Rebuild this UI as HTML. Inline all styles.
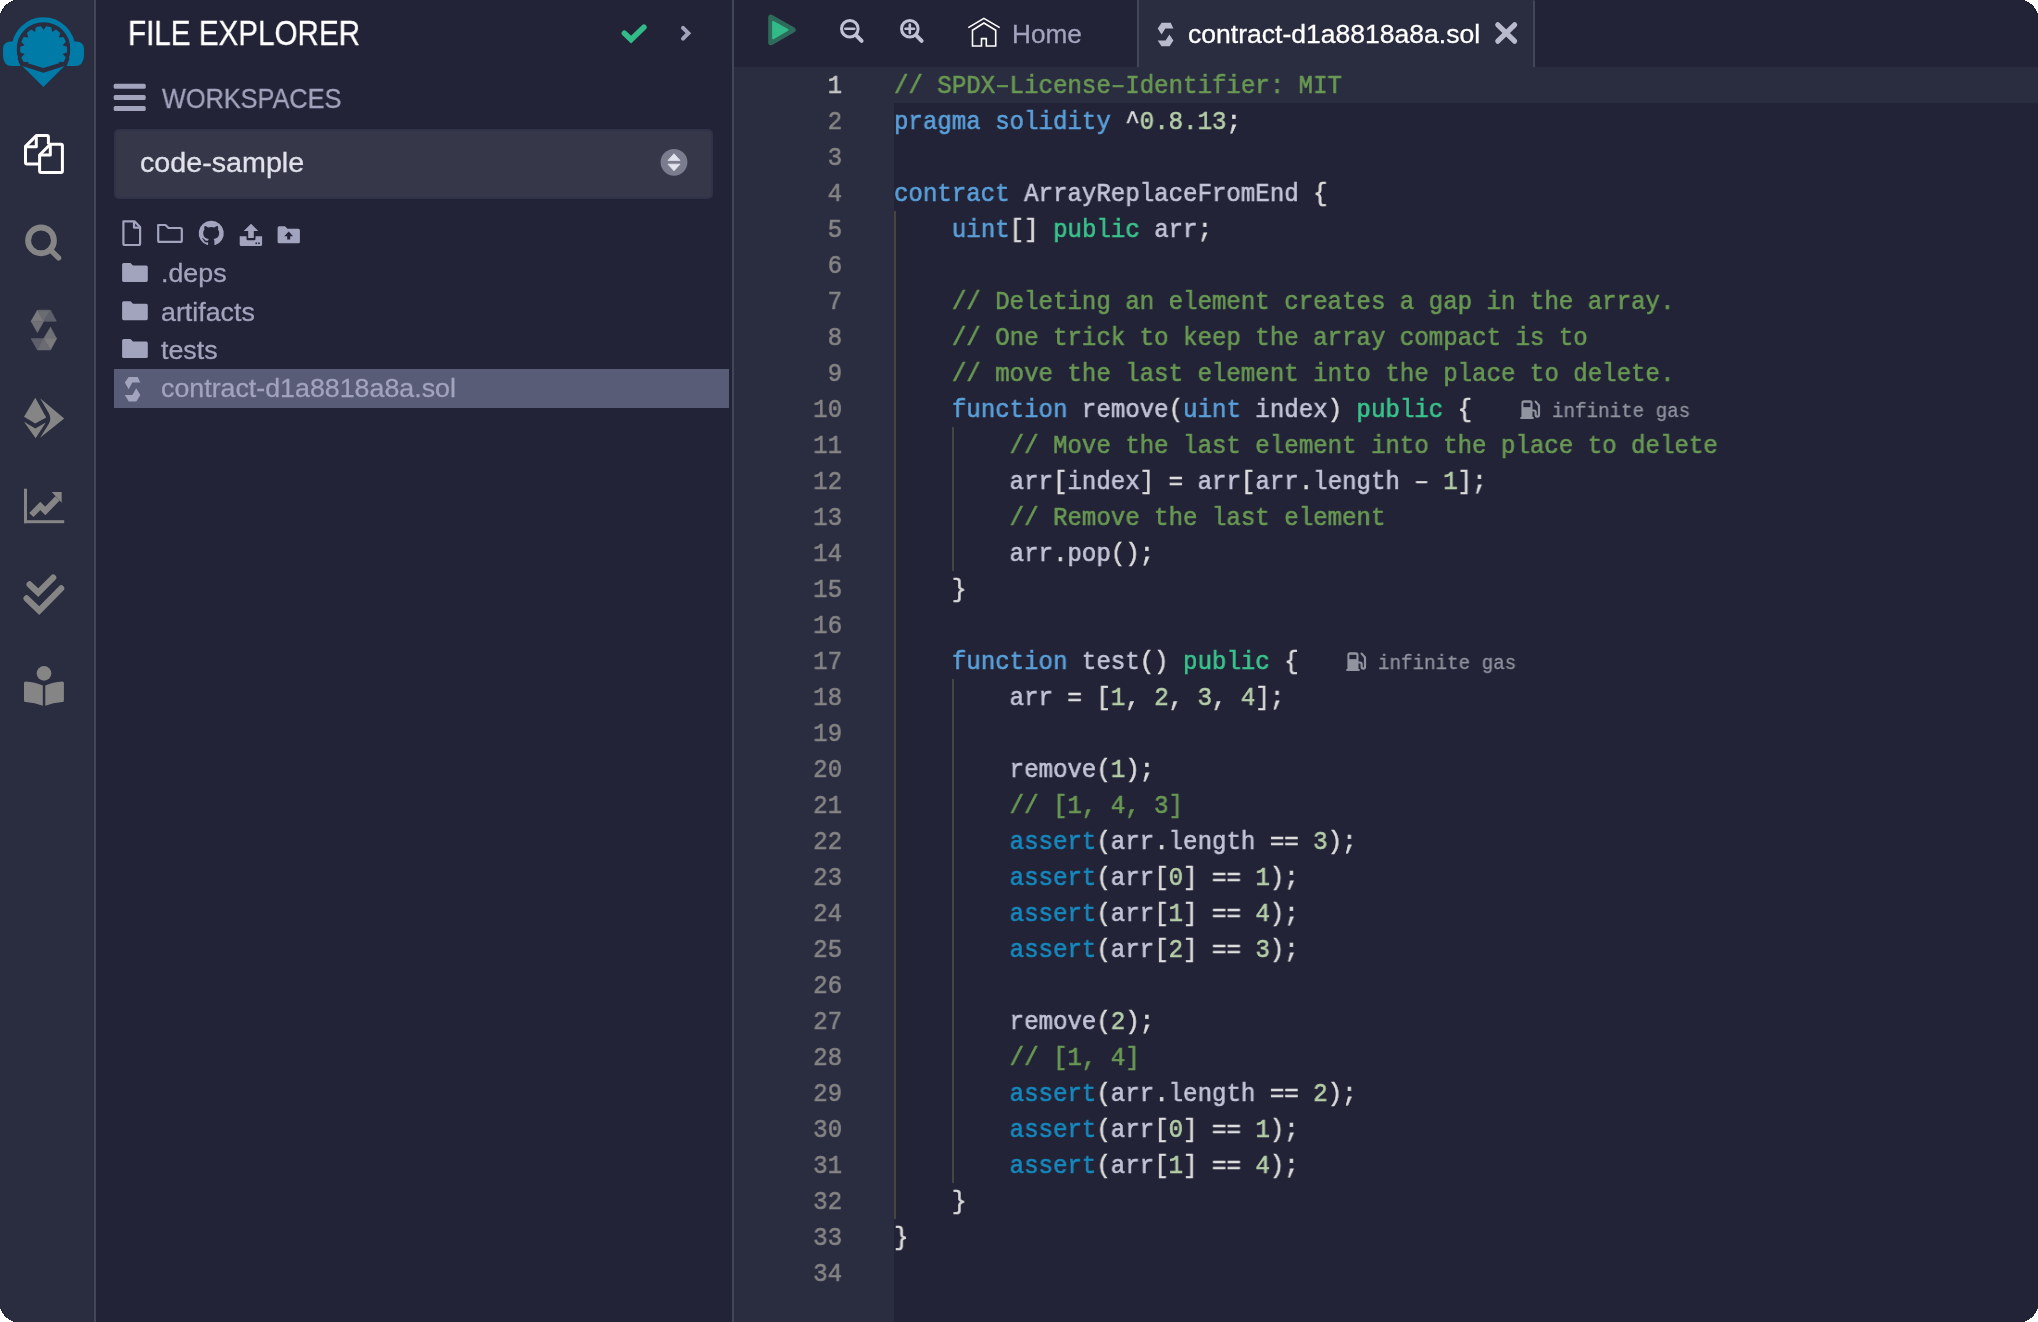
<!DOCTYPE html>
<html><head><meta charset="utf-8">
<style>
html,body{margin:0;padding:0;background:#ffffff;width:2038px;height:1322px;overflow:hidden}
#app{position:absolute;left:0;top:0;width:2038px;height:1322px;overflow:hidden;background:#222336;font-family:"Liberation Sans",sans-serif}
.abs{position:absolute}
.abs,.cl,.ln,.gas,.tree{will-change:transform}
#app div{-webkit-text-stroke:0.3px currentColor}
#iconpanel{left:0;top:0;width:94px;height:1322px;background:#2a2c3f}
#b1{left:94px;top:0;width:2px;height:1322px;background:#414659}
#explorer{left:96px;top:0;width:636px;height:1322px;background:#222336}
#b2{left:732px;top:0;width:2px;height:1322px;background:#414659}
#tabbar{left:734px;top:0;width:1304px;height:67px;background:#222336}
#gutter{left:734px;top:67px;width:160px;height:1255px;background:#2a2c3f}
#code{left:894px;top:67px;width:1144px;height:1255px;background:#222336}
#curline{left:894px;top:67px;width:1144px;height:36px;background:#2a2c3f}
.ln{position:absolute;left:734px;width:108px;text-align:right;font-family:"Liberation Mono",monospace;font-size:26px;line-height:36px;height:36px;color:#858585;padding-top:1px;transform-origin:100% 0;transform:scaleX(0.92147)}
.ln.cur{color:#c6c6c6}
.cl{position:absolute;left:894px;font-family:"Liberation Mono",monospace;font-size:26px;line-height:36px;height:36px;white-space:pre;color:#c3c4d7;padding-top:1px;transform-origin:0 0;transform:scaleX(0.92628)}
#app .cl,#app .ln{-webkit-text-stroke:0.6px currentColor}
.o{color:#dcdcdc}
.c{color:#699953}.k{color:#5aa0da}.p{color:#3ac48d}.n{color:#b5cea8}.a{color:#1789bf}.w{color:#d8d8d8}
.guide{position:absolute;width:2px;background:#45463f}
.tree{left:161px;font-size:25.4px;line-height:30px;transform-origin:0 0;transform:scaleX(1.055);color:#a2a3bd;white-space:nowrap}
.gas{color:#8f949e;font-family:"Liberation Mono",monospace;font-size:20px;line-height:36px;height:36px;white-space:pre;padding-top:1px;transform-origin:0 0;transform:scaleX(0.96)}
</style></head><body>
<div id="app">
  <div id="iconpanel" class="abs"></div>
  <div id="b1" class="abs"></div>

  <!-- LOGO -->
  <svg class="abs" style="left:0;top:0" width="94" height="100" viewBox="0 0 94 100">
    <defs>
      <clipPath id="gearclip"><polygon points="0,0 94,0 94,55 67.5,55 64.6,61.4 43.3,67.9 22.2,61.4 19.9,55 0,55"/></clipPath>
      <clipPath id="bandclip"><rect x="0" y="0" width="94" height="58"/></clipPath>
    </defs>
    <circle cx="43.5" cy="49" r="29.3" fill="none" stroke="#007aa6" stroke-width="5" clip-path="url(#bandclip)"/>
    <path d="M19.5 41.5 L10 41.5 Q3 42 3 49 L3 56 Q3.5 66 12 66 L20.5 66 Q16.5 58 16.5 49 Q16.5 45 17.5 41.5 Z" fill="#007aa6"/>
    <path d="M67.5 41.5 L77 41.5 Q84 42 84 49 L84 56 Q83.5 66 75 66 L66.5 66 Q70.5 58 70.5 49 Q70.5 45 69.5 41.5 Z" fill="#007aa6"/>
    <g id="gear">
      <path id="gearpath" fill="#007aa6" clip-path="url(#gearclip)" d="M43.60 30.10 L41.14 26.23 L40.45 26.31 L39.75 26.42 L39.06 26.54 L38.37 26.69 L37.69 26.86 L37.01 27.04 L36.34 27.25 L35.67 27.48 L35.14 32.03 L31.25 29.61 L30.65 29.99 L30.07 30.38 L29.50 30.80 L28.95 31.23 L28.40 31.67 L27.88 32.14 L27.36 32.61 L26.86 33.11 L28.35 37.44 L23.80 36.95 L23.43 37.55 L23.07 38.16 L22.74 38.77 L22.43 39.40 L22.13 40.04 L21.86 40.69 L21.60 41.34 L21.36 42.00 L24.59 45.26 L20.27 46.79 L20.19 47.49 L20.14 48.19 L20.11 48.90 L20.10 49.60 L20.11 50.30 L20.14 51.01 L20.19 51.71 L20.27 52.41 L24.59 53.94 L21.36 57.20 L21.60 57.86 L21.86 58.51 L22.13 59.16 L22.43 59.80 L22.74 60.43 L23.07 61.04 L23.43 61.65 L23.80 62.25 L28.35 61.76 L26.86 66.09 L27.36 66.59 L27.88 67.06 L28.40 67.53 L28.95 67.97 L29.50 68.40 L30.07 68.82 L30.65 69.21 L31.25 69.59 L35.14 67.17 L35.67 71.72 L36.34 71.95 L37.01 72.16 L37.69 72.34 L38.37 72.51 L39.06 72.66 L39.75 72.78 L40.45 72.89 L41.14 72.97 L43.60 69.10 L46.06 72.97 L46.75 72.89 L47.45 72.78 L48.14 72.66 L48.83 72.51 L49.51 72.34 L50.19 72.16 L50.86 71.95 L51.53 71.72 L52.06 67.17 L55.95 69.59 L56.55 69.21 L57.13 68.82 L57.70 68.40 L58.25 67.97 L58.80 67.53 L59.32 67.06 L59.84 66.59 L60.34 66.09 L58.85 61.76 L63.40 62.25 L63.77 61.65 L64.13 61.04 L64.46 60.43 L64.77 59.80 L65.07 59.16 L65.34 58.51 L65.60 57.86 L65.84 57.20 L62.61 53.94 L66.93 52.41 L67.01 51.71 L67.06 51.01 L67.09 50.30 L67.10 49.60 L67.09 48.90 L67.06 48.19 L67.01 47.49 L66.93 46.79 L62.61 45.26 L65.84 42.00 L65.60 41.34 L65.34 40.69 L65.07 40.04 L64.77 39.40 L64.46 38.77 L64.13 38.16 L63.77 37.55 L63.40 36.95 L58.85 37.44 L60.34 33.11 L59.84 32.61 L59.32 32.14 L58.80 31.67 L58.25 31.23 L57.70 30.80 L57.13 30.38 L56.55 29.99 L55.95 29.61 L52.06 32.03 L51.53 27.48 L50.86 27.25 L50.19 27.04 L49.51 26.86 L48.83 26.69 L48.14 26.54 L47.45 26.42 L46.75 26.31 L46.06 26.23 Z"/>
    </g>
    <path d="M22.2 65.9 L43.5 72.7 L64.6 65.9 L43.4 87.1 Z" fill="#007aa6"/>
  </svg>
  <!-- files icon (active) -->
  <svg class="abs" style="left:0;top:120" width="94" height="70" viewBox="0 120 94 70">
    <g fill="none" stroke="#ffffff" stroke-width="3" stroke-linejoin="round">
      <path d="M39.6 163.9 H27 Q25.5 163.9 25.5 162.4 V146.4 L36.3 135.6 H47 Q48.4 135.6 48.4 137 V144.2"/>
      <path d="M36.3 135.6 V146.8 H25.5"/>
      <path d="M41.1 172.5 Q39.6 172.5 39.6 171 V155 L50.3 144.2 H61 Q62.4 144.2 62.4 145.6 V171 Q62.4 172.5 61 172.5 Z"/>
      <path d="M50.3 144.2 V155 H39.6"/>
    </g>
  </svg>
  <!-- search -->
  <svg class="abs" style="left:0;top:210" width="94" height="70" viewBox="0 210 94 70">
    <circle cx="41" cy="240.4" r="12.9" fill="none" stroke="#858585" stroke-width="5.9"/>
    <path d="M51 250.3 L58.6 257.9" stroke="#858585" stroke-width="5.4" stroke-linecap="round"/>
  </svg>
  <!-- solidity -->
  <svg class="abs" style="left:0;top:300" width="94" height="60" viewBox="0 300 94 60">
    <polygon points="37.4,310.2 31,321.3 43.7,321.3" fill="#7b7b7e" stroke="#7b7b7e" stroke-width="0.6" stroke-linejoin="round"/>
    <polygon points="37.4,310.2 50.5,310.2 43.7,321.3" fill="#6b6b72" stroke="#6b6b72" stroke-width="0.6" stroke-linejoin="round"/>
    <polygon points="50.5,310.2 56.4,321.3 43.7,321.3" fill="#5e5f6b" stroke="#5e5f6b" stroke-width="0.6" stroke-linejoin="round"/>
    <polygon points="31,321.3 43.7,321.3 37.4,332.5" fill="#707176" stroke="#707176" stroke-width="0.6" stroke-linejoin="round"/>
    <polygon points="50.5,327.2 43.7,338.6 56.6,338.6" fill="#707176" stroke="#707176" stroke-width="0.6" stroke-linejoin="round"/>
    <polygon points="43.7,338.6 56.6,338.6 50.5,349.9" fill="#7b7b7e" stroke="#7b7b7e" stroke-width="0.6" stroke-linejoin="round"/>
    <polygon points="31,338.6 43.7,338.6 37.4,349.9" fill="#5e5f6b" stroke="#5e5f6b" stroke-width="0.6" stroke-linejoin="round"/>
    <polygon points="43.7,338.6 50.5,349.9 37.4,349.9" fill="#6b6b72" stroke="#6b6b72" stroke-width="0.6" stroke-linejoin="round"/>
  </svg>
  <!-- deploy -->
  <svg class="abs" style="left:0;top:390" width="94" height="60" viewBox="0 390 94 60">
    <g fill="#858585">
      <polygon points="35.3,397.8 24,416.8 35.3,423.4 46.2,417.5"/>
      <polygon points="24,421.8 35.3,428.4 45.8,422.5 35.6,438.2"/>
      <path d="M40.1 398.2 L64.2 418.6 L40.1 437.7 L49 423.5 Q51.5 418.5 49 413.5 Z"/>
    </g>
  </svg>
  <!-- chart -->
  <svg class="abs" style="left:0;top:480" width="94" height="50" viewBox="0 480 94 50">
    <g fill="#858585">
      <rect x="24" y="488.7" width="3" height="34.5"/>
      <rect x="24" y="520.2" width="40.2" height="3"/>
      <polygon points="51.7,491.9 61.7,491.9 61.7,502.8"/>
    </g>
    <path d="M31.4 515 L40.3 505.9 L45.3 510.9 L57.5 498.3" fill="none" stroke="#858585" stroke-width="6" stroke-linejoin="miter"/>
  </svg>
  <!-- double check -->
  <svg class="abs" style="left:0;top:565" width="94" height="55" viewBox="0 565 94 55">
    <g fill="none" stroke="#858585" stroke-width="6.2" stroke-linecap="round" stroke-linejoin="miter">
      <path d="M29.6 584.4 L38.2 592.6 L53.2 577.6"/>
      <path d="M26.6 598.4 L39.2 610.6 L61.2 588.4"/>
    </g>
  </svg>
  <!-- book reader -->
  <svg class="abs" style="left:0;top:660" width="94" height="55" viewBox="0 660 94 55">
    <g fill="#858585">
      <circle cx="44" cy="673.4" r="7.3"/>
      <path d="M24 683 Q24 681.5 25.5 681.5 Q35 682 42.8 685.5 V705.8 Q35 702.5 25.5 702 Q24 702 24 700.5 Z"/>
      <path d="M63.9 683 Q63.9 681.5 62.4 681.5 Q53 682 45.3 685.5 V705.8 Q53 702.5 62.4 702 Q63.9 702 63.9 700.5 Z"/>
    </g>
  </svg>

  <div id="explorer" class="abs"></div>
  
  <!-- EXPLORER -->
  <div class="abs" id="fe-title" style="left:128px;top:12px;font-size:35px;line-height:42px;color:#ffffff;white-space:nowrap;transform-origin:0 0;transform:scaleX(0.846)">FILE EXPLORER</div>
  <svg class="abs" style="left:600px;top:10px" width="110" height="50" viewBox="600 10 110 50">
    <path d="M624.4 33.2 L631.1 39.6 L643.9 27.2" fill="none" stroke="#32ba89" stroke-width="5.5" stroke-linecap="round" stroke-linejoin="miter"/>
    <path d="M683 27.8 L688.4 33.2 L683 38.6" fill="none" stroke="#a2a3bd" stroke-width="4" stroke-linecap="round" stroke-linejoin="miter"/>
  </svg>
  <svg class="abs" style="left:110px;top:80px" width="40" height="35" viewBox="110 80 40 35">
    <g fill="#a2a3bd">
      <rect x="113.7" y="83.8" width="32" height="5" rx="1.5"/>
      <rect x="113.7" y="94.9" width="32" height="5" rx="1.5"/>
      <rect x="113.7" y="105.9" width="32" height="5.2" rx="1.5"/>
    </g>
  </svg>
  <div class="abs" id="ws-title" style="left:162px;top:83px;font-size:28px;line-height:32px;color:#a2a3bd;white-space:nowrap;transform-origin:0 0;transform:scaleX(0.903)">WORKSPACES</div>
  <div class="abs" style="left:114px;top:129px;width:599px;height:70px;box-sizing:border-box;border-radius:5px;background:#363849;border:2px solid #30324a"></div>
  <div class="abs" id="ws-sel" style="left:140px;top:146px;font-size:26.8px;line-height:34px;color:#e0e1ea;white-space:nowrap;transform-origin:0 0;transform:scaleX(1.07)">code-sample</div>
  <svg class="abs" style="left:655px;top:144px" width="40" height="40" viewBox="655 144 40 40">
    <circle cx="674" cy="162.3" r="13.4" fill="#7b7d8f"/>
    <polygon points="668,160.4 680,160.4 674,153.8" fill="#e3e4ee" stroke="#e3e4ee" stroke-width="0.8" stroke-linejoin="round"/>
    <polygon points="668,164.2 680,164.2 674,170.8" fill="#e3e4ee" stroke="#e3e4ee" stroke-width="0.8" stroke-linejoin="round"/>
  </svg>
  <!-- file action icons -->
  <svg class="abs" style="left:115px;top:215px" width="195" height="38" viewBox="115 215 195 38">
    <g fill="none" stroke="#a2a3bd" stroke-width="2.2" stroke-linejoin="round">
      <path d="M123.4 221.4 H134.5 L140.1 227 V243.5 Q140.1 245 138.6 245 H124.9 Q123.4 245 123.4 243.5 Z"/>
      <path d="M134 221.4 V227.6 H140.1"/>
      <path d="M158.2 225 H165.5 L168.5 228 H180.3 Q181.8 228 181.8 229.5 V240.4 Q181.8 241.9 180.3 241.9 H159.7 Q158.2 241.9 158.2 240.4 Z"/>
    </g>
    <g fill="#a2a3bd">
      <path d="M211.2 220.8 A12.4 12.4 0 0 0 207.3 245 C207.9 245.1 208.1 244.7 208.1 244.4 V242.3 C204.6 243 203.9 240.8 203.9 240.8 C203.3 239.4 202.5 239 202.5 239 C201.4 238.2 202.6 238.2 202.6 238.2 C203.8 238.3 204.5 239.5 204.5 239.5 C205.6 241.4 207.4 240.8 208.1 240.5 C208.2 239.7 208.6 239.2 208.9 238.9 C206.1 238.6 203.2 237.5 203.2 232.8 C203.2 231.4 203.7 230.3 204.5 229.4 C204.4 229.1 203.9 227.8 204.6 226.1 C204.6 226.1 205.7 225.8 208.1 227.4 A11.8 11.8 0 0 1 214.3 227.4 C216.7 225.8 217.8 226.1 217.8 226.1 C218.5 227.8 218 229.1 217.9 229.4 C218.7 230.3 219.2 231.4 219.2 232.8 C219.2 237.5 216.3 238.6 213.5 238.9 C214 239.3 214.4 240.1 214.4 241.2 V244.4 C214.4 244.7 214.6 245.1 215.2 245 A12.4 12.4 0 0 0 211.2 220.8 Z"/>
      <path d="M251 223.7 L258.3 231 H253.8 V238 H248.2 V231 H243.7 Z"/>
      <path d="M239.7 236.2 H246.5 V239 Q246.5 240.3 247.8 240.3 H254.2 Q255.5 240.3 255.5 239 V236.2 H262.1 V244.6 Q262.1 246.1 260.6 246.1 H241.2 Q239.7 246.1 239.7 244.6 Z"/>
      <path d="M277.6 227.7 Q277.6 226.2 279.1 226.2 H285 L287.5 228.7 H298.4 Q299.9 228.7 299.9 230.2 V241.7 Q299.9 243.2 298.4 243.2 H279.1 Q277.6 243.2 277.6 241.7 Z"/>
    </g>
    <g fill="#222336">
      <rect x="255.5" y="242.5" width="1.6" height="1.6"/><rect x="258.2" y="242.5" width="1.6" height="1.6"/>
      <path d="M288.7 231.6 L293.1 236.2 H290.2 V239.6 H287.2 V236.2 H284.3 Z"/>
    </g>
  </svg>
  <!-- tree -->
  <svg class="abs" style="left:115px;top:255px" width="40" height="110" viewBox="115 255 40 110">
    <g fill="#a2a3bd">
      <path id="fold1" d="M122.1 264.5 Q122.1 262.9 123.7 262.9 H130.5 L133 265.4 H146.2 Q147.8 265.4 147.8 267 V280.3 Q147.8 281.9 146.2 281.9 H123.7 Q122.1 281.9 122.1 280.3 Z"/>
      <use href="#fold1" y="38.3"/>
      <use href="#fold1" y="76.2"/>
    </g>
  </svg>
  <div class="abs tree" style="top:257.5px">.deps</div>
  <div class="abs tree" style="top:296.5px">artifacts</div>
  <div class="abs tree" style="top:334.5px">tests</div>
  <div class="abs" style="left:114px;top:369px;width:615px;height:39px;background:#595c76"></div>
  <svg class="abs" style="left:115px;top:370px" width="35" height="38" viewBox="115 370 35 38">
    <g fill="#a2a3bd">
      <polygon points="128.7,377 137.7,377 140.3,382.6 132.3,382.6 128.7,389.2 124.8,382.6"/>
      <polygon points="136.2,388.3 140.3,395 136.4,401.4 128.8,401.4 124.8,395 132.4,395"/>
    </g>
  </svg>
  <div class="abs tree" style="top:372.5px">contract-d1a8818a8a.sol</div>

  <div id="b2" class="abs"></div>
  <div id="tabbar" class="abs"></div>
  <div id="gutter" class="abs"></div>
  <div id="code" class="abs"></div>
  <div id="curline" class="abs"></div>

  <!-- TABBAR -->
  <svg class="abs" style="left:740px;top:0" width="220" height="67" viewBox="740 0 220 67">
    <polygon points="770.9,17.3 770.9,42.6 793,29.9" fill="#2d6b5b" stroke="#2d6b5b" stroke-width="5.4" stroke-linejoin="round"/>
    <polygon points="773.1,22 773.1,38.3 787.6,29.9" fill="#32ba89" stroke="#32ba89" stroke-width="2" stroke-linejoin="round"/>
    <g fill="none" stroke="#c0c1d3">
      <circle cx="849.8" cy="28.8" r="8.3" stroke-width="3"/>
      <path d="M856.2 35.4 L861.6 40.8" stroke-width="4" stroke-linecap="round"/>
      <path d="M845.3 28.8 H854.3" stroke-width="2.6" stroke-linecap="round"/>
      <circle cx="909.8" cy="28.8" r="8.3" stroke-width="3"/>
      <path d="M916.2 35.4 L921.6 40.8" stroke-width="4" stroke-linecap="round"/>
      <path d="M905.5 28.8 H914.1 M909.8 24.5 V33.1" stroke-width="2.6" stroke-linecap="round"/>
    </g>
  </svg>
  <svg class="abs" style="left:960px;top:10px" width="50" height="45" viewBox="960 10 50 45">
    <g fill="none" stroke="#ffffff" stroke-width="1.6" stroke-linejoin="miter">
      <path d="M968.3 27.6 L983.9 18.4 L999.7 27.6"/>
      <path d="M972.5 46 V30.2 L983.9 23 L995.7 30.2 V46 H986.3 V38.6 H981.5 V46 Z"/>
    </g>
  </svg>
  <div class="abs" id="home-t" style="left:1012px;top:18px;font-size:25.8px;line-height:32px;color:#a2a3bd;white-space:nowrap;transform-origin:0 0;transform:scaleX(1.015)">Home</div>
  <div class="abs" style="left:1137px;top:0;width:398px;height:67px;box-sizing:border-box;background:#2a2c3f;border-left:2px solid #414659;border-right:2px solid #414659;border-top-right-radius:2px"></div>
  <svg class="abs" style="left:1150px;top:15px" width="30" height="38" viewBox="1150 15 30 38">
    <g fill="#b9bacc">
      <polygon points="1161.6,22.8 1170.7,22.8 1173.4,28.4 1165.3,28.4 1161.6,34.4 1157.7,28.4"/>
      <polygon points="1169.4,34.6 1173.4,40.5 1169.6,46.3 1161.5,46.3 1157.7,40.5 1165.6,40.5"/>
    </g>
  </svg>
  <div class="abs" id="tab-t" style="left:1188px;top:18px;font-size:25.4px;line-height:32px;color:#ffffff;transform-origin:0 0;transform:scaleX(1.045);white-space:nowrap">contract-d1a8818a8a.sol</div>
  <svg class="abs" style="left:1490px;top:17px" width="32" height="32" viewBox="1490 17 32 32">
    <path d="M1497.8 24.8 L1514.6 41.2 M1514.6 24.8 L1497.8 41.2" stroke="#b9bacc" stroke-width="5.2" stroke-linecap="round"/>
  </svg>

  <!--LINES-->
<div class="ln cur" style="top:67px">1</div>
<div class="cl" style="top:67px"><span class="c">// SPDX–License–Identifier: MIT</span></div>
<div class="ln" style="top:103px">2</div>
<div class="cl" style="top:103px"><span class="k">pragma</span> <span class="k">solidity</span> <span class="o">^</span><span class="n">0.8.13</span><span class="o">;</span></div>
<div class="ln" style="top:139px">3</div>
<div class="cl" style="top:139px"></div>
<div class="ln" style="top:175px">4</div>
<div class="cl" style="top:175px"><span class="k">contract</span> ArrayReplaceFromEnd <span class="o">{</span></div>
<div class="ln" style="top:211px">5</div>
<div class="cl" style="top:211px">    <span class="k">uint</span><span class="w">[]</span> <span class="p">public</span> arr<span class="o">;</span></div>
<div class="ln" style="top:247px">6</div>
<div class="cl" style="top:247px"></div>
<div class="ln" style="top:283px">7</div>
<div class="cl" style="top:283px">    <span class="c">// Deleting an element creates a gap in the array.</span></div>
<div class="ln" style="top:319px">8</div>
<div class="cl" style="top:319px">    <span class="c">// One trick to keep the array compact is to</span></div>
<div class="ln" style="top:355px">9</div>
<div class="cl" style="top:355px">    <span class="c">// move the last element into the place to delete.</span></div>
<div class="ln" style="top:391px">10</div>
<div class="cl" style="top:391px">    <span class="k">function</span> remove<span class="o">(</span><span class="k">uint</span> index<span class="o">)</span> <span class="p">public</span> <span class="o">{</span></div>
<div class="ln" style="top:427px">11</div>
<div class="cl" style="top:427px">        <span class="c">// Move the last element into the place to delete</span></div>
<div class="ln" style="top:463px">12</div>
<div class="cl" style="top:463px">        arr<span class="o">[</span>index<span class="o">]</span> <span class="o">=</span> arr<span class="o">[</span>arr<span class="o">.</span>length <span class="o">–</span> <span class="n">1</span><span class="o">];</span></div>
<div class="ln" style="top:499px">13</div>
<div class="cl" style="top:499px">        <span class="c">// Remove the last element</span></div>
<div class="ln" style="top:535px">14</div>
<div class="cl" style="top:535px">        arr<span class="o">.</span>pop<span class="o">();</span></div>
<div class="ln" style="top:571px">15</div>
<div class="cl" style="top:571px">    <span class="o">}</span></div>
<div class="ln" style="top:607px">16</div>
<div class="cl" style="top:607px"></div>
<div class="ln" style="top:643px">17</div>
<div class="cl" style="top:643px">    <span class="k">function</span> test<span class="o">()</span> <span class="p">public</span> <span class="o">{</span></div>
<div class="ln" style="top:679px">18</div>
<div class="cl" style="top:679px">        arr <span class="o">=</span> <span class="o">[</span><span class="n">1</span><span class="o">,</span> <span class="n">2</span><span class="o">,</span> <span class="n">3</span><span class="o">,</span> <span class="n">4</span><span class="o">];</span></div>
<div class="ln" style="top:715px">19</div>
<div class="cl" style="top:715px"></div>
<div class="ln" style="top:751px">20</div>
<div class="cl" style="top:751px">        remove<span class="o">(</span><span class="n">1</span><span class="o">);</span></div>
<div class="ln" style="top:787px">21</div>
<div class="cl" style="top:787px">        <span class="c">// [1, 4, 3]</span></div>
<div class="ln" style="top:823px">22</div>
<div class="cl" style="top:823px">        <span class="a">assert</span><span class="o">(</span>arr<span class="o">.</span>length <span class="o">==</span> <span class="n">3</span><span class="o">);</span></div>
<div class="ln" style="top:859px">23</div>
<div class="cl" style="top:859px">        <span class="a">assert</span><span class="o">(</span>arr<span class="o">[</span><span class="n">0</span><span class="o">]</span> <span class="o">==</span> <span class="n">1</span><span class="o">);</span></div>
<div class="ln" style="top:895px">24</div>
<div class="cl" style="top:895px">        <span class="a">assert</span><span class="o">(</span>arr<span class="o">[</span><span class="n">1</span><span class="o">]</span> <span class="o">==</span> <span class="n">4</span><span class="o">);</span></div>
<div class="ln" style="top:931px">25</div>
<div class="cl" style="top:931px">        <span class="a">assert</span><span class="o">(</span>arr<span class="o">[</span><span class="n">2</span><span class="o">]</span> <span class="o">==</span> <span class="n">3</span><span class="o">);</span></div>
<div class="ln" style="top:967px">26</div>
<div class="cl" style="top:967px"></div>
<div class="ln" style="top:1003px">27</div>
<div class="cl" style="top:1003px">        remove<span class="o">(</span><span class="n">2</span><span class="o">);</span></div>
<div class="ln" style="top:1039px">28</div>
<div class="cl" style="top:1039px">        <span class="c">// [1, 4]</span></div>
<div class="ln" style="top:1075px">29</div>
<div class="cl" style="top:1075px">        <span class="a">assert</span><span class="o">(</span>arr<span class="o">.</span>length <span class="o">==</span> <span class="n">2</span><span class="o">);</span></div>
<div class="ln" style="top:1111px">30</div>
<div class="cl" style="top:1111px">        <span class="a">assert</span><span class="o">(</span>arr<span class="o">[</span><span class="n">0</span><span class="o">]</span> <span class="o">==</span> <span class="n">1</span><span class="o">);</span></div>
<div class="ln" style="top:1147px">31</div>
<div class="cl" style="top:1147px">        <span class="a">assert</span><span class="o">(</span>arr<span class="o">[</span><span class="n">1</span><span class="o">]</span> <span class="o">==</span> <span class="n">4</span><span class="o">);</span></div>
<div class="ln" style="top:1183px">32</div>
<div class="cl" style="top:1183px">    <span class="o">}</span></div>
<div class="ln" style="top:1219px">33</div>
<div class="cl" style="top:1219px"><span class="o">}</span></div>
<div class="ln" style="top:1255px">34</div>
<div class="cl" style="top:1255px"></div>
<!--/LINES-->

  <div class="guide" style="left:894px;top:211px;height:1008px"></div>
  <div class="guide" style="left:952px;top:427px;height:144px"></div>
  <div class="guide" style="left:952px;top:679px;height:504px"></div>
  <svg class="abs" style="left:1515px;top:395px" width="30" height="30" viewBox="1515 395 30 30">
    <g id="gaspump">
      <rect x="1520.2" y="417" width="13.6" height="2.1" rx="0.8" fill="#8f949e"/>
      <path d="M1521.4 402.8 Q1521.4 400.3 1523.9 400.3 H1530 Q1532.5 400.3 1532.5 402.8 V417 H1521.4 Z" fill="#8f949e"/>
      <rect x="1523.4" y="402.8" width="7" height="4.3" fill="#222336"/>
      <path d="M1532.4 410.5 H1534.2 Q1535.6 410.5 1535.6 412 V414.5 Q1535.6 416.7 1537.3 416.7 Q1539 416.7 1539 414.5 V405.5 L1535.6 401.6" fill="none" stroke="#8f949e" stroke-width="2.2" stroke-linejoin="round" stroke-linecap="round"/>
    </g>
  </svg>
  <svg class="abs" style="left:1341px;top:647px" width="30" height="30" viewBox="1515 395 30 30">
    <use href="#gaspump" x="0" y="0"/>
  </svg>
  <div class="abs gas" style="left:1552px;top:393px">infinite gas</div>
  <div class="abs gas" style="left:1378px;top:645px">infinite gas</div>


  <svg class="abs" style="left:0;top:0;z-index:50" width="16" height="16" shape-rendering="crispEdges"><g fill="#161726"><rect x="13" y="0" width="1" height="1"/><rect x="11" y="1" width="1" height="1"/><rect x="9" y="2" width="1" height="1"/><rect x="8" y="3" width="1" height="1"/><rect x="6" y="4" width="1" height="1"/><rect x="5" y="5" width="1" height="1"/><rect x="4" y="6" width="1" height="2"/><rect x="3" y="8" width="1" height="1"/><rect x="2" y="9" width="1" height="2"/><rect x="1" y="11" width="1" height="2"/></g><g fill="#ffffff"><rect x="0" y="0" width="13" height="1"/><rect x="0" y="1" width="11" height="1"/><rect x="0" y="2" width="9" height="1"/><rect x="0" y="3" width="8" height="1"/><rect x="0" y="4" width="6" height="1"/><rect x="0" y="5" width="5" height="1"/><rect x="0" y="6" width="4" height="2"/><rect x="0" y="8" width="3" height="1"/><rect x="0" y="9" width="2" height="2"/><rect x="0" y="11" width="1" height="2"/></g></svg>
  <svg class="abs" style="left:2022px;top:0;z-index:50;transform:scaleX(-1)" width="16" height="16" shape-rendering="crispEdges"><g fill="#161726"><rect x="13" y="0" width="1" height="1"/><rect x="11" y="1" width="1" height="1"/><rect x="9" y="2" width="1" height="1"/><rect x="8" y="3" width="1" height="1"/><rect x="6" y="4" width="1" height="1"/><rect x="5" y="5" width="1" height="1"/><rect x="4" y="6" width="1" height="2"/><rect x="3" y="8" width="1" height="1"/><rect x="2" y="9" width="1" height="2"/><rect x="1" y="11" width="1" height="2"/></g><g fill="#ffffff"><rect x="0" y="0" width="13" height="1"/><rect x="0" y="1" width="11" height="1"/><rect x="0" y="2" width="9" height="1"/><rect x="0" y="3" width="8" height="1"/><rect x="0" y="4" width="6" height="1"/><rect x="0" y="5" width="5" height="1"/><rect x="0" y="6" width="4" height="2"/><rect x="0" y="8" width="3" height="1"/><rect x="0" y="9" width="2" height="2"/><rect x="0" y="11" width="1" height="2"/></g></svg>
  <svg class="abs" style="left:0;top:1306px;z-index:50;transform:scaleY(-1)" width="16" height="16" shape-rendering="crispEdges"><g fill="#161726"><rect x="13" y="0" width="1" height="1"/><rect x="11" y="1" width="1" height="1"/><rect x="9" y="2" width="1" height="1"/><rect x="8" y="3" width="1" height="1"/><rect x="6" y="4" width="1" height="1"/><rect x="5" y="5" width="1" height="1"/><rect x="4" y="6" width="1" height="2"/><rect x="3" y="8" width="1" height="1"/><rect x="2" y="9" width="1" height="2"/><rect x="1" y="11" width="1" height="2"/></g><g fill="#ffffff"><rect x="0" y="0" width="13" height="1"/><rect x="0" y="1" width="11" height="1"/><rect x="0" y="2" width="9" height="1"/><rect x="0" y="3" width="8" height="1"/><rect x="0" y="4" width="6" height="1"/><rect x="0" y="5" width="5" height="1"/><rect x="0" y="6" width="4" height="2"/><rect x="0" y="8" width="3" height="1"/><rect x="0" y="9" width="2" height="2"/><rect x="0" y="11" width="1" height="2"/></g></svg>
  <svg class="abs" style="left:2022px;top:1306px;z-index:50;transform:scale(-1,-1)" width="16" height="16" shape-rendering="crispEdges"><g fill="#161726"><rect x="13" y="0" width="1" height="1"/><rect x="11" y="1" width="1" height="1"/><rect x="9" y="2" width="1" height="1"/><rect x="8" y="3" width="1" height="1"/><rect x="6" y="4" width="1" height="1"/><rect x="5" y="5" width="1" height="1"/><rect x="4" y="6" width="1" height="2"/><rect x="3" y="8" width="1" height="1"/><rect x="2" y="9" width="1" height="2"/><rect x="1" y="11" width="1" height="2"/></g><g fill="#ffffff"><rect x="0" y="0" width="13" height="1"/><rect x="0" y="1" width="11" height="1"/><rect x="0" y="2" width="9" height="1"/><rect x="0" y="3" width="8" height="1"/><rect x="0" y="4" width="6" height="1"/><rect x="0" y="5" width="5" height="1"/><rect x="0" y="6" width="4" height="2"/><rect x="0" y="8" width="3" height="1"/><rect x="0" y="9" width="2" height="2"/><rect x="0" y="11" width="1" height="2"/></g></svg>
</div>
</body></html>
